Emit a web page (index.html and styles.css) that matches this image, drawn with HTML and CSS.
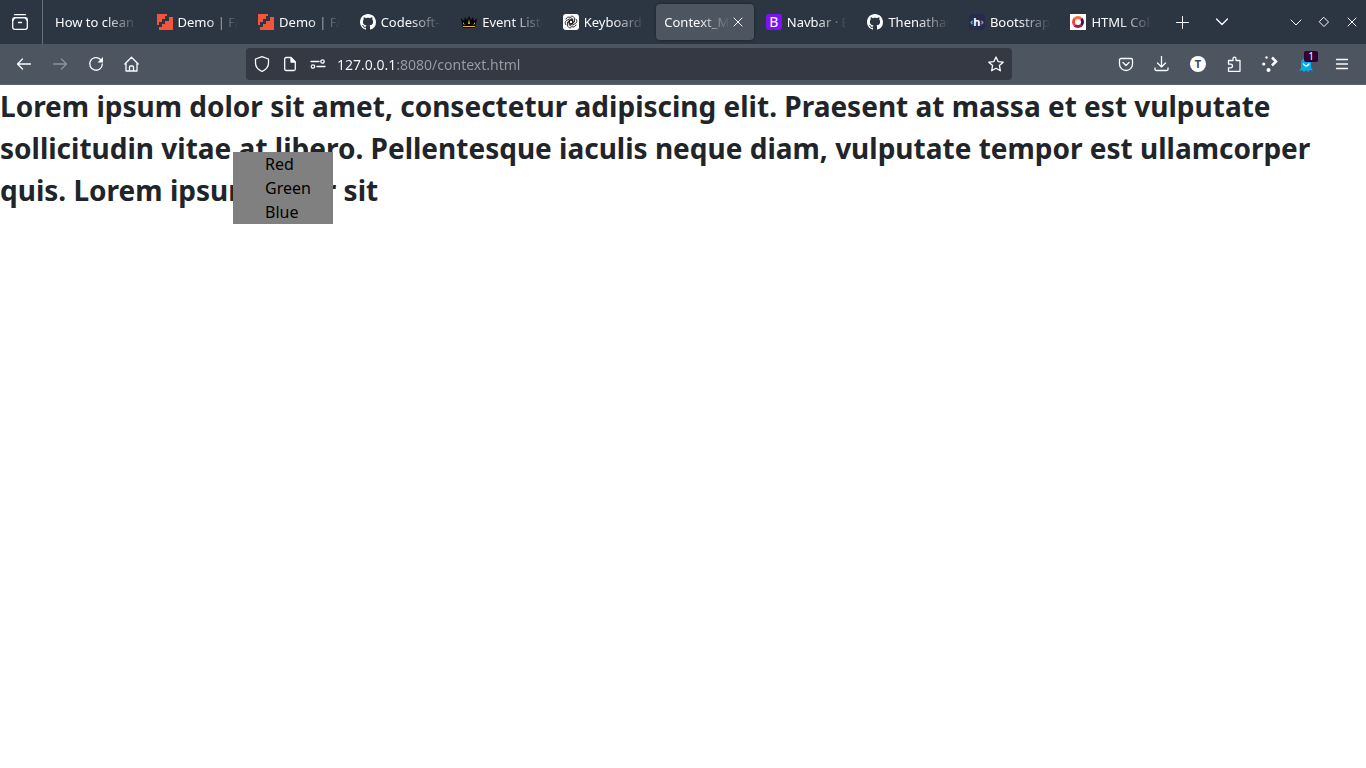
FILE: index.html
```html
<!DOCTYPE html>
<html lang="en">
<head>
<meta charset="utf-8">
<meta name="viewport" content="width=device-width, initial-scale=1">
<title>Context_Menu</title>
<link rel="stylesheet" href="styles.css">
</head>
<body>
<svg class="defs" aria-hidden="true">
  <symbol id="github" viewBox="0 0 16 16"><path fill="#fff" d="M8 0C3.58 0 0 3.58 0 8c0 3.54 2.29 6.53 5.47 7.59.4.07.55-.17.55-.38 0-.19-.01-.82-.01-1.49-2.01.37-2.53-.49-2.69-.94-.09-.23-.48-.94-.82-1.13-.28-.15-.68-.52-.01-.53.63-.01 1.08.58 1.23.82.72 1.21 1.87.87 2.33.66.07-.52.28-.87.51-1.07-1.78-.2-3.64-.89-3.64-3.95 0-.87.31-1.59.82-2.15-.08-.2-.36-1.02.08-2.12 0 0 .67-.21 2.2.82.64-.18 1.32-.27 2-.27s1.36.09 2 .27c1.53-1.04 2.2-.82 2.2-.82.44 1.1.16 1.92.08 2.12.51.56.82 1.27.82 2.15 0 3.07-1.87 3.75-3.65 3.95.29.25.54.73.54 1.48 0 1.07-.01 1.93-.01 2.2 0 .21.15.46.55.38A8.01 8.01 0 0 0 16 8c0-4.42-3.58-8-8-8z"/></symbol>
  <symbol id="stairs" viewBox="0 0 16 16"><path fill="#f3553a" d="M0 0h10v2H8v3H5v3H2v3H0zM12 3h4v13H2v-3h3v-3h3V7h4z"/></symbol>
</svg>
<header class="browser">
  <div class="tabstrip">
    <button class="archive" aria-label="Firefox View"><svg class="icon" viewBox="0 0 16 16"><path d="M2.5.7h11" /><rect x=".7" y="3.7" width="14.6" height="11.6" rx="2"/><path d="M.8 6.500 3 3.700h10l2.200 2.800M6.500 8.500h3"/></svg></button>
    <nav class="tabs" aria-label="Open tabs">
      <div class="tab"><button class="label">How to clean up</button></div>
      <div class="tab"><svg class="icon"><use href="#stairs"/></svg><button class="label">Demo | FAQ</button></div>
      <div class="tab"><svg class="icon"><use href="#stairs"/></svg><button class="label">Demo | FAQ</button></div>
      <div class="tab"><svg class="icon"><use href="#github"/></svg><button class="label">Codesoft-web</button></div>
      <div class="tab"><svg class="icon" viewBox="0 0 16 16"><path class="flat" fill="#080604" d="M0 4l3 3 1-4 2 3 2-4 2 4 2-3 1 4 3-3-2 10H2z"/><path class="flat" fill="#e9b51d" d="M2 12h12v1H2zM7 10l1-5 1 5zM2 8l2 3-2-1zM14 8l-2 3 2-1z"/></svg><button class="label">Event Listener</button></div>
      <div class="tab"><svg class="icon" viewBox="0 0 16 16"><rect class="flat" width="16" height="16" rx="3" fill="#fff"/><g class="knot"><path id="petal" d="M8 2.200c2-.5 3.600 1 3.500 2.800v3L8 10 5.500 8.600"/><use href="#petal" transform="rotate(60 8 8)"/><use href="#petal" transform="rotate(120 8 8)"/><use href="#petal" transform="rotate(180 8 8)"/><use href="#petal" transform="rotate(240 8 8)"/><use href="#petal" transform="rotate(300 8 8)"/></g></svg><button class="label">Keyboard event</button></div>
      <div class="tab active"><button class="label" aria-current="page">Context_Menu</button><button class="close" aria-label="Close tab"><svg class="thin" viewBox="0 0 10 10"><path d="m1 1 8 8M9 1 1 9"/></svg></button></div>
      <div class="tab"><span class="icon badge-b">B</span><button class="label">Navbar · Bootstrap</button></div>
      <div class="tab"><svg class="icon"><use href="#github"/></svg><button class="label">Thenathaniel</button></div>
      <div class="tab"><span class="icon badge-h"><i>‹</i>h<i>›</i></span><button class="label">Bootstrap nav</button></div>
      <div class="tab"><span class="icon badge-ring"><span class="ring"></span></span><button class="label">HTML Color</button></div>
    </nav>
    <div class="strip-tools">
      <button aria-label="New tab"><svg class="icon thin" viewBox="0 0 16 16"><path d="M8.500 2.500v12M2.500 8.500h12"/></svg></button>
      <button aria-label="List all tabs"><svg class="icon" viewBox="0 0 16 16"><path d="m2.500 5 5.500 5.500L13.500 5"/></svg></button>
    </div>
    <div class="window-tools">
      <button aria-label="Minimize"><svg class="icon thin" viewBox="0 0 16 16"><path d="m3 6 5 5 5-5"/></svg></button>
      <button aria-label="Restore"><svg class="icon thin" viewBox="0 0 16 16"><path d="m8 3.500 4.500 4.500L8 12.500 3.500 8z"/></svg></button>
      <button aria-label="Close window"><svg class="icon thin" viewBox="0 0 16 16"><path d="m4 4 8 8M12 4l-8 8"/></svg></button>
    </div>
  </div>
  <div class="toolbar">
    <div class="nav-tools">
      <button aria-label="Back"><svg class="icon" viewBox="0 0 16 16"><path d="M14.500 8H1.500M6.500 3 1.500 8l5 5"/></svg></button>
      <button aria-label="Forward" disabled><svg class="icon" viewBox="0 0 16 16"><path d="M1.500 8h13M9.500 3l5 5-5 5"/></svg></button>
      <button aria-label="Reload"><svg class="icon" viewBox="0 0 16 16"><path d="M12.500 3.500A6.300 6.300 0 1 0 14.300 8"/><path class="flat" fill="#fbfbfe" d="M15 1v5.500H9.500z"/></svg></button>
      <button aria-label="Home"><svg class="icon" viewBox="0 0 16 16"><path d="m.8 8 6.700-6.700L14.200 8M2 7v8h11V7M5.500 15v-4q0-1 1-1h2q1 0 1 1v4"/></svg></button>
    </div>
    <div class="urlbar">
      <svg class="icon" viewBox="0 0 16 16"><path d="M8 .7 14.500 3v4q0 5.500-6.500 8.500Q1.500 12.500 1.500 7V3z"/></svg>
      <svg class="icon" viewBox="0 0 16 16"><path d="M2.700 3q0-1.500 1.500-1.500H9L13.300 6v7q0 1.500-1.500 1.500H4.200q-1.500 0-1.500-1.500z"/><path class="solid" d="M9 2v4h4z"/></svg>
      <svg class="icon" viewBox="0 0 16 16"><path d="M1 5.500h8M7 10.500h8"/><circle cx="12.500" cy="5.500" r="1.700"/><circle cx="3" cy="10.500" r="1.700"/></svg>
      <input class="url" type="text" aria-label="Address" value="127.0.0.1:8080/context.html" spellcheck="false">
      <button aria-label="Bookmark this page"><svg class="icon" viewBox="0 0 16 16"><path d="m8 1 2.100 4.600 5.100.6-3.800 3.400 1 5.200L8 12.300l-4.400 2.500 1-5.200L.8 6.200l5.100-.6z"/></svg></button>
    </div>
    <div class="page-tools">
      <button aria-label="Save to Pocket"><svg class="icon" viewBox="0 0 16 16"><path d="M3 2.500h10q1.500 0 1.500 1.500v4a6.500 6.500 0 0 1-13 0V4q0-1.500 1.500-1.500zM5 6.500l3 3 3-3"/></svg></button>
      <button aria-label="Downloads"><svg class="icon" viewBox="0 0 16 16"><path d="M7.500.5v10M3.500 7l4 4 4-4M1 12v1.500Q1 14.500 2.500 14.500h10q1.500 0 1.500-1V12"/></svg></button>
      <button aria-label="Account"><span class="icon avatar">T</span></button>
      <button aria-label="Extensions"><svg class="icon" viewBox="0 0 16 16"><path d="M2.500 6.500v-2H7V3q0-1.800 1.500-1.800T10 3v1.500h4v10.800H2.500v-3.500h2q2 0 2-1.800t-2-1.800h-2z"/></svg></button>
      <button aria-label="Extension shortcuts"><svg class="icon" viewBox="0 0 16 16"><circle class="flat" cx="4.500" cy="1.500" r="1.200" fill="#fff"/><circle class="flat" cx="1.700" cy="8" r="1.600" fill="#fff"/><circle class="flat" cx="6.500" cy="14" r="2" fill="#fff"/><path class="bold" d="m10 1.500 4 4-4 4"/></svg></button>
      <button class="ghost" aria-label="Ghostery, 1 tracker"><svg class="icon" viewBox="0 0 16 16"><path class="flat" fill="#00aef0" d="M3 7a5 5 0 0 1 10 0v5l2 3-3-1-2 2-2-2-2 2-2-2-3 1 2-3z"/><path class="smile" d="M5.500 8Q8 12 11 8"/></svg><span class="count">1</span></button>
      <button aria-label="Open menu"><svg class="icon" viewBox="0 0 16 16"><path d="M2.500 3.500h11M2.500 8h11M2.500 12.500h11"/></svg></button>
    </div>
  </div>
</header>
<main class="page">
  <h1 class="copy">Lorem ipsum dolor sit amet, consectetur adipiscing elit. Praesent at massa et est vulputate sollicitudin vitae at libero. Pellentesque iaculis neque diam, vulputate tempor est ullamcorper quis. Lorem ipsum dolor sit</h1>
  <ul class="context-menu">
    <li><button>Red</button></li>
    <li><button>Green</button></li>
    <li><button>Blue</button></li>
  </ul>
</main>
</body>
</html>
```
FILE: styles.css
```css
* { box-sizing: border-box; }
body { margin: 0; min-height: 100vh; background: #fff; font-family: "Noto Sans", sans-serif; }
button { margin: 0; padding: 0; border: 0; background: none; color: inherit; font: inherit; }
.defs { display: none; }
.icon { display: block; flex: none; width: 16px; height: 16px; }
svg { fill: none; stroke: currentColor; stroke-width: 1.3; stroke-linecap: round; stroke-linejoin: round; }
symbol { stroke: none; }
.thin { stroke-width: 1; }
.flat { stroke: none; }
.solid { fill: currentColor; }
.bold { stroke-width: 2.5; stroke-linecap: butt; stroke-linejoin: miter; }
.knot { stroke: #111; stroke-width: .8; }
.smile { stroke: #fff; }

.browser { color: #fbfbfe; font-size: 13px; }
.tabstrip { display: flex; height: 44px; background: #2c3643; }
.archive { display: flex; align-items: center; justify-content: center; width: 43px; padding-right: 3px; border-right: 1px solid #65707d; }
.tabs { display: flex; flex: 1; min-width: 0; padding: 4px 0 4px 2px; }
.tab { display: flex; flex: 1 1 0; align-items: center; gap: 5px; min-width: 0; margin: 0 2px; padding: 0 8px; border-radius: 4px; }
.label { flex: 1; min-width: 0; overflow: hidden; white-space: nowrap; text-align: left; line-height: 20px; mask-image: linear-gradient(to left, transparent, #000 32px); }
.active { gap: 0; background: #4c5560; box-shadow: 0 0 3px rgba(0, 0, 0, .5); }
.close { width: 16px; height: 16px; display: grid; place-items: center; }
.close svg { width: 10px; height: 10px; }
.badge-b { border-radius: 3px; background: #7d12f6; font: 14px/16px "Noto Sans", sans-serif; text-align: center; }
.badge-h { display: flex; align-items: center; justify-content: center; border-radius: 3px; background: #262b4c; font: bold 11px/16px "Noto Sans", sans-serif; }
.badge-h i { color: #a3a3cf; font-size: 9px; font-style: normal; }
.badge-ring { display: grid; place-items: center; background: #fff; }
.ring { width: 12px; height: 12px; border: 3px solid; border-color: #ff6a36 #4c1246 #a01c4c #f4453c; border-radius: 50%; }
.strip-tools { display: flex; }
.strip-tools button { display: grid; place-items: center; width: 40px; }
.window-tools { display: flex; padding-left: 40px; }
.window-tools button { display: grid; place-items: center; width: 28px; }

.toolbar { display: flex; align-items: center; gap: 8px; height: 41px; border-bottom: 1px solid #5d6671; background: #4c5560; }
.nav-tools { display: flex; flex: none; width: 238px; padding-left: 6px; }
.nav-tools button, .page-tools button { display: grid; place-items: center; width: 36px; height: 32px; }
.nav-tools button:disabled { color: #8e949b; }
.urlbar { display: flex; flex: 1; align-items: center; gap: 12px; min-width: 0; height: 32px; padding: 0 8px; border-radius: 4px; background: #343944; }
.url { flex: 1; min-width: 0; margin-left: -1px; padding: 1px 0 0; border: 0; outline: 0; font: 14px/20px "Noto Sans", sans-serif; color: transparent; background: linear-gradient(to right, #fbfbfe 59px, #9b9da3 59px); background-clip: text; -webkit-background-clip: text; }
.page-tools { display: flex; flex: none; width: 346px; justify-content: flex-end; padding-right: 6px; }
.avatar { border-radius: 50%; background: #fff; color: #444c56; font: bold 11px/16px "Noto Sans", sans-serif; text-align: center; }
.ghost { position: relative; }
.count { position: absolute; top: 3px; right: 6px; width: 14px; height: 11px; border-radius: 2px; background: #330033; font-size: 10px; line-height: 11px; text-align: center; }

.page { position: relative; }
.copy { margin: 0; color: #212529; font-size: 28px; font-weight: 700; line-height: 42px; }
.context-menu { position: absolute; top: 67px; left: 233px; width: 100px; margin: 0; padding: 0 0 0 32px; background: #808080; color: #000; font-size: 16px; line-height: 24px; list-style: none; }
.context-menu button { display: block; width: 100%; text-align: left; }
```
